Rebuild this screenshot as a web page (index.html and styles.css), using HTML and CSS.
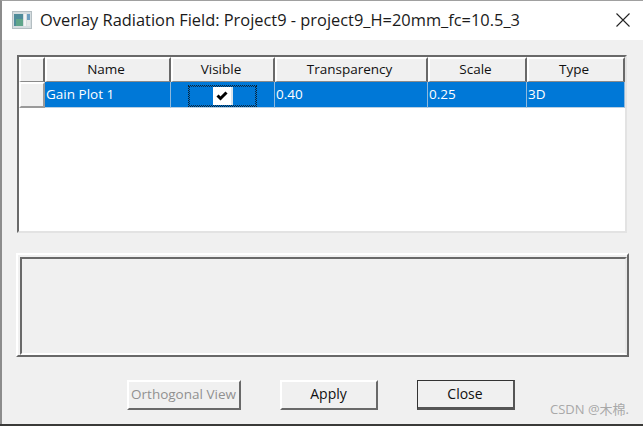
FILE: index.html
```html
<!DOCTYPE html>
<html lang="en">
<head>
    <meta charset="UTF-8">
    <meta name="viewport" content="width=device-width, initial-scale=1.0">
    <title>Overlay Radiation Field</title>
    <link rel="stylesheet" href="styles.css">
</head>
<body>
    <div class="window">
        <div class="titlebar">
            <svg class="app-icon" width="20" height="18" viewBox="0 0 20 18">
                <rect x="0.5" y="0.5" width="19" height="17" fill="#d5dde0" stroke="#b4bec2"/>
                <rect x="2" y="3" width="9" height="12" fill="#4f8c9a"/>
                <rect x="4" y="8" width="7" height="7" fill="#5fa58a"/>
                <rect x="12" y="3" width="2" height="12" fill="#f2f4f4"/>
                <rect x="15" y="3" width="3" height="6" fill="#6f9fc0"/>
                <rect x="15" y="9" width="3" height="6" fill="#e4e8e8"/>
            </svg>
            <span class="title">Overlay Radiation Field: Project9 - project9_H=20mm_fc=10.5_3</span>
            <svg class="close-x" width="14" height="14" viewBox="0 0 14 14">
                <path d="M0.5 0.5L13.5 13.5M13.5 0.5L0.5 13.5" stroke="#222" stroke-width="1.1" fill="none"/>
            </svg>
        </div>

        <div class="content">
            <div class="table-frame">
                <div class="grid-row">
                    <div class="cell head"></div>
                    <div class="cell head">Name</div>
                    <div class="cell head">Visible</div>
                    <div class="cell head">Transparency</div>
                    <div class="cell head">Scale</div>
                    <div class="cell head">Type</div>
                </div>
                <div class="grid-row">
                    <div class="cell head row-head"></div>
                    <div class="cell data">Gain Plot 1</div>
                    <div class="cell data check-cell">
                        <div class="focus-box">
                            <div class="checkbox">
                                <svg width="12" height="10" viewBox="0 0 12 10">
                                    <path d="M1.5 4.5L4.5 7.5L10.5 1.5" stroke="#000" stroke-width="3" fill="none"/>
                                </svg>
                            </div>
                        </div>
                    </div>
                    <div class="cell data">0.40</div>
                    <div class="cell data">0.25</div>
                    <div class="cell data">3D</div>
                </div>
            </div>

            <div class="group-box">
                <div class="group-inner"></div>
            </div>

            <div class="buttons">
                <button class="btn btn-ortho" disabled>Orthogonal View</button>
                <button class="btn btn-apply">Apply</button>
                <button class="btn btn-close">Close</button>
            </div>
        </div>
        <div class="watermark">CSDN @木棉.</div>
    </div>
</body>
</html>
```

FILE: styles.css
```css
* {
    box-sizing: border-box;
}
html, body {
    margin: 0;
    height: 426px;
    overflow: hidden;
}
body {
    font-family: 'Open Sans', 'Noto Sans', sans-serif;
    font-size: 13.5px;
    background: #3a3a38;
}
.window {
    position: relative;
    height: 424px;
    background: #f0f0f0;
    border-top: 1px solid #a0a0a0;
    border-left: 2px solid #8c8c8c;
}
.titlebar {
    height: 39px;
    background: #fff;
    display: flex;
    align-items: center;
    padding: 0 13px 2px 10px;
}
.app-icon {
    flex: none;
    margin-right: 8px;
}
.title {
    font-size: 16.4px;
    color: #1a1a1a;
    flex: 1;
    white-space: nowrap;
}
.content {
    padding: 15px 14px 0 14px;
}
.table-frame {
    width: 610px;
    height: 178px;
    margin-left: 1px;
    background: #fff;
    border-top: 2px solid #696969;
    border-left: 2px solid #696969;
    border-right: 2px solid #e3e3e3;
    border-bottom: 2px solid #e3e3e3;
}
.grid-row {
    display: grid;
    grid-template-columns: 26px 126px 104px 153px 99px 98px;
    height: 26px;
}
.grid-row:first-child {
    height: 25px;
}
.cell {
    display: flex;
    align-items: center;
    color: #111;
    overflow: hidden;
    white-space: nowrap;
}
.head {
    justify-content: center;
    background: #f0f0f0;
    padding: 0 4px 2px 0;
    border-top: 2px solid #fff;
    border-left: 2px solid #fff;
    border-right: 2px solid #696969;
    border-bottom: 1px solid #8a8a8a;
}
.row-head {
    border-bottom: 2px solid #9a9a9a;
    border-right: 2px solid #9a9a9a;
}
.data {
    background: #0078d7;
    color: #fff;
    padding: 0 0 2px 1px;
    border-right: 1px solid #8fb8dc;
    border-bottom: 1px solid #b9cfe2;
}
.check-cell {
    justify-content: center;
    padding: 2px 0 0 0;
}
.focus-box {
    width: 69px;
    height: 22px;
    border: 1px dotted #10202c;
    outline: 1px dotted #0d2a44;
    outline-offset: -2px;
    display: flex;
    justify-content: center;
    align-items: center;
}
.checkbox {
    width: 20px;
    height: 18px;
    background: #fff;
    border-right: 2px solid #d8e4ec;
    display: flex;
    align-items: center;
    justify-content: center;
}
.group-box {
    width: 613px;
    height: 104px;
    margin-top: 20px;
    border-top: 2px solid #fff;
    border-left: 2px solid #fff;
    border-right: 2px solid #696969;
    border-bottom: 2px solid #696969;
}
.group-inner {
    margin: 2px 0 0 2px;
    height: 98px;
    border-top: 2px solid #696969;
    border-left: 2px solid #696969;
    border-right: 2px solid #e8e8e8;
    border-bottom: 2px solid #fff;
}
.buttons {
    display: flex;
    margin-top: 23px;
    padding-left: 111px;
}
.btn {
    height: 30px;
    padding: 0 1px 3px 0;
    font: inherit;
    font-size: 14px;
    color: #111;
    background: #f0f0f0;
    border-top: 2px solid #fff;
    border-left: 2px solid #fff;
    border-right: 2px solid #696969;
    border-bottom: 2px solid #696969;
}
.btn-ortho {
    width: 114px;
    color: #909090;
    font-size: 13.5px;
}
.btn-apply {
    width: 98px;
    margin-left: 39px;
}
.btn-close {
    width: 98px;
    margin-left: 39px;
    padding-bottom: 1px;
    border: 1px solid #333;
    border-right: 2px solid #555;
    border-bottom: 3px solid #555;
}
.watermark {
    position: absolute;
    right: 14px;
    bottom: 6px;
    font-size: 13px;
    color: #a8a8a8;
    font-family: 'Open Sans', 'Noto Sans CJK SC', sans-serif;
}
```
